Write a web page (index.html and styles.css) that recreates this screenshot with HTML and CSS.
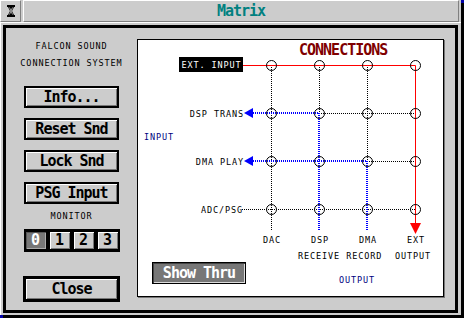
FILE: index.html
```html
<!DOCTYPE html>
<html lang="en">
<head>
    <meta charset="UTF-8">
    <title>Matrix</title>
    <link rel="stylesheet" href="styles.css">
</head>
<body>
    <div class="window">
        <div class="titlebar">
            <div class="closer">
                <svg width="8" height="12" viewBox="0 0 8 12">
                    <path d="M0 0h8v2h-1l-2 4 2 4h1v2H0v-2h1l2-4-2-4H0z" fill="#000"/>
                    <path d="M2.5 2.5l3 7M5.5 2.5l-3 7" stroke="#ccc" stroke-width="0.8"/>
                </svg>
            </div>
            <div class="title">Matrix</div>
        </div>
        <div class="work">
            <div class="dialog">
                <div class="side">
                    <div class="small heading">FALCON SOUND<br>CONNECTION SYSTEM</div>
                    <button class="btn first">Info...</button>
                    <button class="btn">Reset Snd</button>
                    <button class="btn">Lock Snd</button>
                    <button class="btn">PSG Input</button>
                    <div class="small monitor-label">MONITOR</div>
                    <div class="monitor">
                        <span class="seg active">0</span>
                        <span class="seg">1</span>
                        <span class="seg">2</span>
                        <span class="seg">3</span>
                    </div>
                    <button class="btn close">Close</button>
                </div>
                <div class="panel">
                    <svg class="matrix" width="305" height="222" viewBox="0 0 305 222">
                        <text class="head" x="161" y="15">CONNECTIONS</text>

                        <g class="dots">
                            <path d="M133.5 25V190M181.5 25V73M229.5 25V121"/>
                            <path d="M181 73.5H277M229 121.5H277M104 169.5H277"/>
                        </g>
                        <g class="blue">
                            <path d="M115 73H181V190M115 121H229V190"/>
                        </g>
                        <polygon points="106,73 115,68 115,78" fill="#0000ff"/>
                        <polygon points="106,121 115,116 115,126" fill="#0000ff"/>
                        <path class="red" d="M105 25.5H277.5V184"/>
                        <polygon points="272,183 283,183 277.5,194" fill="#ff0000"/>

                        <g class="nodes">
                            <circle cx="133.5" cy="25.5" r="5"/>
                            <circle cx="181.5" cy="25.5" r="5"/>
                            <circle cx="229.5" cy="25.5" r="5"/>
                            <circle cx="277.5" cy="25.5" r="5"/>
                            <circle cx="133.5" cy="73.5" r="5"/>
                            <circle cx="181.5" cy="73.5" r="5"/>
                            <circle cx="229.5" cy="73.5" r="5"/>
                            <circle cx="277.5" cy="73.5" r="5"/>
                            <circle cx="133.5" cy="121.5" r="5"/>
                            <circle cx="181.5" cy="121.5" r="5"/>
                            <circle cx="229.5" cy="121.5" r="5"/>
                            <circle cx="277.5" cy="121.5" r="5"/>
                            <circle cx="133.5" cy="169.5" r="5"/>
                            <circle cx="181.5" cy="169.5" r="5"/>
                            <circle cx="229.5" cy="169.5" r="5"/>
                            <circle cx="277.5" cy="169.5" r="5"/>
                        </g>

                        <rect x="41" y="17" width="64" height="15" fill="#000"/>
                        <text class="lbl inv" x="73.5" y="28" text-anchor="middle">EXT. INPUT</text>
                        <text class="lbl" x="106" y="76.5" text-anchor="end">DSP TRANS</text>
                        <text class="lbl" x="106" y="124.5" text-anchor="end">DMA PLAY</text>
                        <text class="lbl" x="105" y="172.5" text-anchor="end">ADC/PSG</text>
                        <text class="lbl navy" x="6" y="99.5">INPUT</text>

                        <text class="lbl" x="134" y="203" text-anchor="middle">DAC</text>
                        <text class="lbl" x="182" y="203" text-anchor="middle">DSP</text>
                        <text class="lbl" x="230" y="203" text-anchor="middle">DMA</text>
                        <text class="lbl" x="278" y="203" text-anchor="middle">EXT</text>
                        <text class="lbl" x="160" y="219">RECEIVE RECORD</text>
                        <text class="lbl" x="257" y="219">OUTPUT</text>
                    </svg>
                    <div class="panel-foot">
                        <button class="btn show">Show Thru</button>
                        <span class="small output">OUTPUT</span>
                    </div>
                </div>
            </div>
        </div>
    </div>
</body>
</html>
```

FILE: styles.css
```css
body {
    margin: 0;
    width: 464px;
    height: 318px;
    overflow: hidden;
    background: #0000aa;
    font-family: "DejaVu Sans Mono", monospace;
}
.window {
    width: 461px;
    height: 315px;
    background: #cccccc;
    box-shadow: 3px 3px 0 #000;
    display: flex;
    flex-direction: column;
}
.titlebar {
    display: flex;
    gap: 2px;
    height: 22px;
    padding-right: 2px;
}
.closer, .title {
    box-sizing: border-box;
    height: 22px;
    border-top: 1px solid #fff;
    border-left: 1px solid #fff;
    border-right: 1px solid #808080;
    border-bottom: 1px solid #808080;
}
.closer {
    width: 21px;
    display: flex;
    align-items: center;
    justify-content: center;
}
.title {
    flex: 1;
    text-align: center;
    color: #008080;
    font-weight: bold;
    font-size: 15px;
    letter-spacing: -1px;
    line-height: 20px;
}
.work {
    flex: 1;
    border-top: 1px solid #fff;
    border-left: 1px solid #fff;
    padding: 2px 0 0 2px;
}
.dialog {
    box-sizing: border-box;
    width: 455px;
    height: 288px;
    border: 3px solid #000;
    display: flex;
}
.side {
    width: 131px;
    display: flex;
    flex-direction: column;
    align-items: center;
}
.small {
    font-size: 8.5px;
    letter-spacing: 0.9px;
}
.heading {
    padding-top: 10px;
    line-height: 17px;
    text-align: center;
}
.btn {
    box-sizing: border-box;
    width: 95px;
    height: 22px;
    margin: 10px 0 0;
    padding: 0;
    border: 2px solid #000;
    background: #cccccc;
    box-shadow: inset 1px 1px 0 #fff, inset -1px -1px 0 #777;
    font-family: "DejaVu Sans Mono", monospace;
    font-weight: bold;
    font-size: 15px;
    letter-spacing: -1px;
    color: #000;
}
.btn.first {
    margin-top: 14px;
}
.monitor-label {
    margin-top: 6px;
    line-height: 12px;
}
.monitor {
    margin-top: 7px;
    width: 96px;
    height: 23px;
    box-sizing: border-box;
    padding: 3px 2px;
    background: #000;
    display: flex;
    gap: 4px;
}
.seg {
    width: 20px;
    background: #cccccc;
    box-shadow: inset 1px 1px 0 #fff, inset -1px -1px 0 #777;
    text-align: center;
    font-weight: bold;
    font-size: 15px;
    line-height: 17px;
}
.seg.active {
    background: #777;
    color: #fff;
    box-shadow: inset 1px 1px 0 #555, inset -1px -1px 0 #aaa;
}
.btn.close {
    width: 97px;
    height: 26px;
    margin-top: 24px;
    border-width: 3px;
}
.panel {
    margin-top: 11px;
    width: 305px;
    height: 256px;
    background: #fff;
    border: 1px solid #000;
    box-shadow: 1px 1px 0 #777;
    display: flex;
    flex-direction: column;
}
.matrix {
    display: block;
}
.head {
    font-family: "DejaVu Sans Mono", monospace;
    font-weight: bold;
    font-size: 15px;
    letter-spacing: -1px;
    fill: #800000;
}
.lbl {
    font-family: "DejaVu Sans Mono", monospace;
    font-size: 8.5px;
    letter-spacing: 0.9px;
    fill: #000;
}
.lbl.inv {
    fill: #fff;
}
.lbl.navy {
    fill: #000080;
}
.dots path {
    fill: none;
    stroke: #000;
    stroke-width: 1;
    stroke-dasharray: 1 1;
}
.blue path {
    fill: none;
    stroke: #0000ff;
    stroke-width: 2;
    stroke-dasharray: 1 1;
}
.red {
    fill: none;
    stroke: #ff0000;
    stroke-width: 1;
}
.nodes circle {
    fill: none;
    stroke: #000;
    stroke-width: 1;
}
.panel-foot {
    display: flex;
    align-items: flex-start;
    padding-left: 14px;
}
.btn.show {
    width: 94px;
    margin-top: 0;
    border-width: 1px;
    background: #777;
    color: #fff;
    box-shadow: inset 1px 1px 0 #444, inset -1px -1px 0 #ddd;
}
.output {
    margin: 12px 0 0 93px;
    line-height: 12px;
    color: #000080;
}
```
